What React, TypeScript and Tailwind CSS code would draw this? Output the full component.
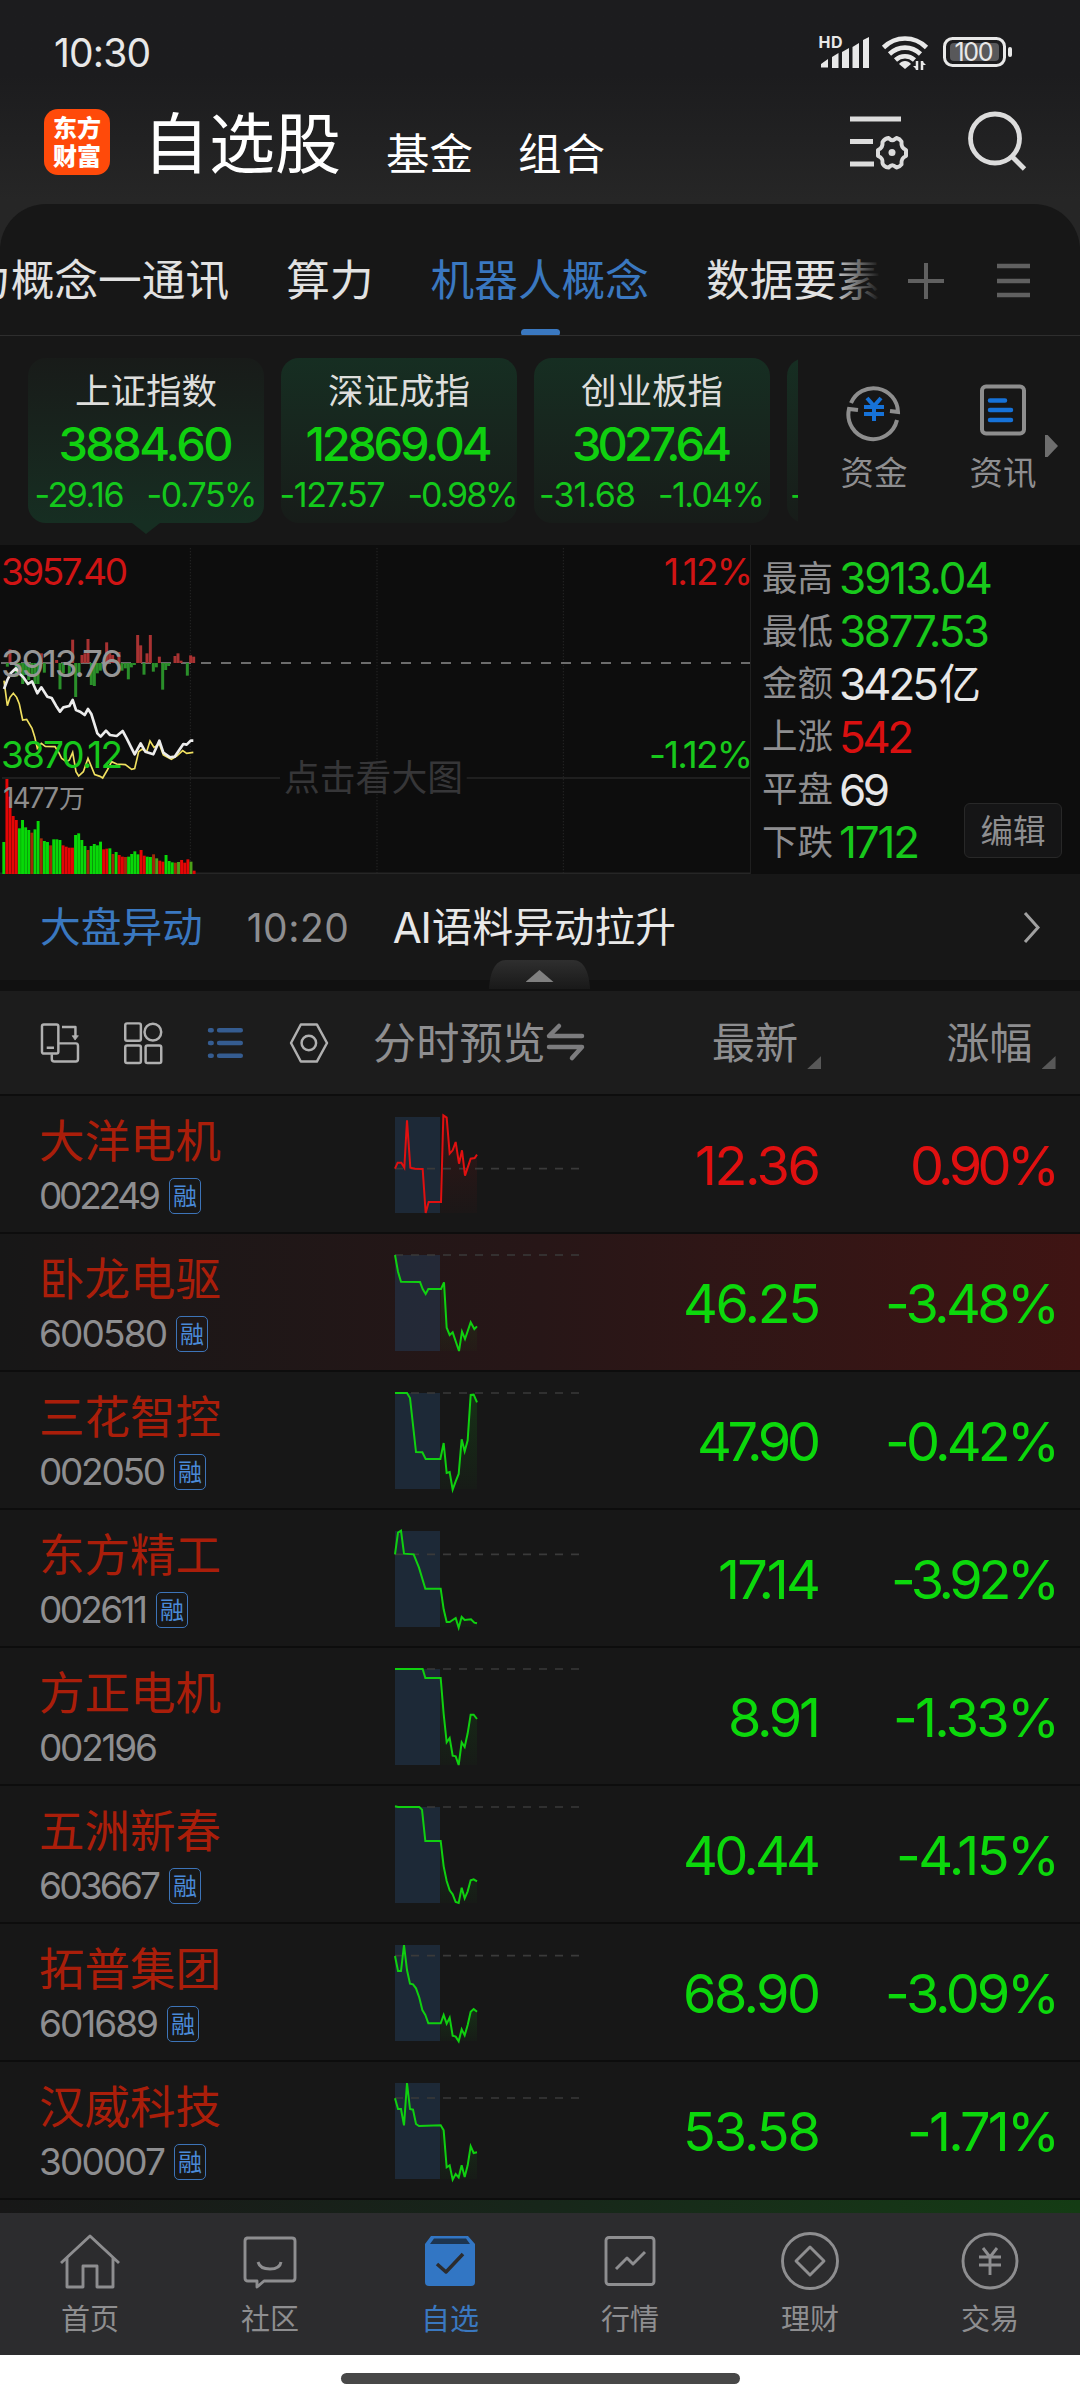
import { useLayoutEffect, useRef, useState, type ReactNode } from 'react';

const UP = '#e01010';
const DOWN = '#10d010';

/** Text whose tracking is adjusted so that it fills exactly `w` pixels. */
function Fit({ w, className = '', children }: { w: number; className?: string; children: string }) {
  const ref = useRef<HTMLSpanElement>(null);
  const [track, setTrack] = useState(0);
  useLayoutEffect(() => {
    const el = ref.current;
    if (!el) return;
    el.style.letterSpacing = '0px';
    const natural = el.getBoundingClientRect().width;
    const next = (w - natural) / Math.max(1, Array.from(children).length - 1);
    el.style.letterSpacing = `${next}px`;
    setTrack(next);
  }, [w, children]);
  return (
    <span ref={ref} className={`inline-block whitespace-nowrap ${className}`} style={{ letterSpacing: `${track}px`, marginRight: `${-track}px` }}>
      {children}
    </span>
  );
}

const CJK = "font-['Noto_Sans_CJK_SC',sans-serif]";

function StatusBar() {
  return (
    <div className="flex h-[100px] items-start justify-between pl-[54px] pr-[68px]">
      <Fit w={97} className="mt-[33px] text-[39px] leading-[40px] text-[#e8e8e8]">10:30</Fit>
      <svg className="mt-[20px]" width="202" height="60" viewBox="810 20 202 60" fill="none">
        <text x="818.5" y="48" fontSize="16" fontWeight="700" fill="#e8e8e8" textLength="24">HD</text>
        <g fill="#e8e8e8">
          <path d="M821 64l7-5v8.500h-7zM832 57l6.500-4v15h-6.500zM842 52l7-4v20h-7zM852.500 47l6.500-4v25h-6.500zM863 40l6-3v31h-6z" />
          <path d="M899 64l6 5 6-5c-3-4-9-4-12 0z" />
        </g>
        <g stroke="#e8e8e8" strokeWidth="4.600">
          <path d="M883.500 47.500c12-12 31-12 43 0M889.500 54c9-8.500 22-8.500 31 0M895.500 60c5.500-5 13.500-5 19 0" />
          <path d="M917 61v9M922 61v9" strokeWidth="2.500" />
        </g>
        <path d="M913 66h4v4zM922 61l4 4h-4z" fill="#e8e8e8" />
        <rect x="944.500" y="38.500" width="60" height="27" rx="8" stroke="#e8e8e8" strokeWidth="3" />
        <rect x="950" y="43" width="49" height="18" rx="4" fill="#58585a" />
        <rect x="1008" y="47" width="4" height="10" rx="2" fill="#e8e8e8" />
        <text x="974" y="61" fontSize="25" fill="#e8e8e8" textAnchor="middle" textLength="39">100</text>
      </svg>
    </div>
  );
}

function Header() {
  return (
    <div className={`flex h-[104px] items-start pl-[44px] ${CJK} text-white`}>
      <div className="mt-[9px] flex h-[66px] w-[66px] flex-col items-center justify-center rounded-[14px] bg-[#ff4a0a] pb-[2px] text-[24px] font-black leading-[28px]">
        <span>东方</span>
        <span>财富</span>
      </div>
      <div className="ml-[33px] mt-[1px] w-[201px] whitespace-nowrap text-[66px] leading-[76px]">自选股</div>
      <div className="ml-[42px] mt-[22px] text-[43.500px] leading-[60px]">基金</div>
      <div className="ml-[45px] mt-[22px] text-[43.500px] leading-[60px]">组合</div>
      <svg className="ml-auto mr-[45px] mt-[5px]" width="187" height="80" viewBox="848 105 187 80" fill="none" stroke="#dcdcdc" strokeWidth="4.800">
        <path d="M850 119h51M850 141.500h23M850 164h24" />
        <path
          d="M892 137.500c3 3 4.500 3 8 0 2 .5 4 2 5 3.500-.5 5 1 7 4.500 8.500v6c-3.500 1.500-5 3.500-4.500 8.500-1 1.500-3 2.500-5 3-3.500-3-5-3-8 0-3.500 0-6-3-6-4.500 .5-4-1-5.500-4.500-7v-6c3.500-1.500 5-3.500 4.500-8 1-1.500 3-3.500 6-4z"
          strokeWidth="4"
          strokeLinejoin="round"
          transform="translate(-3.500 0.500)"
        />
        <circle cx="892" cy="152.500" r="3.500" fill="#dcdcdc" stroke="none" />
        <circle cx="995" cy="138.500" r="24.500" />
        <path d="M1011.500 156l13 13" />
      </svg>
    </div>
  );
}

function GroupTabs() {
  return (
    <div className={`flex h-[132px] items-start overflow-hidden border-b border-[#2e2e2e] ${CJK} text-[43.7px] leading-[64px] text-[#e2e2e2]`}>
      <div className="relative flex h-full w-[880px] shrink-0 overflow-hidden pt-[41px]">
        <span className="ml-[-33px] shrink-0">力概念一通讯</span>
        <span className="ml-[57px] shrink-0">算力</span>
        <div className="relative ml-[57px] shrink-0 text-[#3a78c0]">
          机器人概念
          <div className="absolute left-[90px] top-[84px] h-[7px] w-[39px] rounded-full bg-[#3a78c0]" />
        </div>
        <span className="ml-[57px] shrink-0">数据要素</span>
        <div className="absolute right-0 top-0 h-[120px] w-[50px] bg-gradient-to-r from-transparent to-[#171717]" />
      </div>
      <svg className="mt-[50px]" width="160" height="56" viewBox="880 254 160 56" stroke="#606060" strokeWidth="4">
        <path d="M908 281h36M926 263v36" />
        <path d="M997 266h33M997 281h33M997 295h33" strokeWidth="4.500" />
      </svg>
    </div>
  );
}

function IndexCard({ name, value, vw, diff, dw, pct, pw, active = false }: { name: string; value: string; vw: number; diff: string; dw: number; pct: string; pw: number; active?: boolean }) {
  return (
    <div
      className={`relative flex h-[165px] w-[236px] shrink-0 flex-col items-center rounded-[18px] ${
        active ? 'bg-gradient-to-b from-[#181b19] to-[#162e22]' : 'bg-gradient-to-b from-[#162e22] to-[#171c19]'
      }`}
    >
      <span className={`${CJK} mt-[6px] text-[35.500px] leading-[50px] text-[#dededc]`}>{name}</span>
      <Fit w={vw} className="mt-[6px] text-[47px] font-medium leading-[48px] text-[#10d010]">{value}</Fit>
      <div className="mt-[10px] flex w-[236px] items-start justify-center gap-[22px] text-[34px] leading-[34px] text-[#14c81c]">
        <Fit w={dw}>{diff}</Fit>
        <Fit w={pw}>{pct}</Fit>
      </div>
      {active && <div className="absolute top-full h-[11px] w-[28px] bg-[#162e22] [clip-path:polygon(0_0,100%_0,50%_100%)]" />}
    </div>
  );
}

function Indices() {
  return (
    <div className="flex h-[209px] items-start pt-[22px]">
      <div className="flex h-[187px] w-[798px] gap-[17px] overflow-hidden pl-[28px]">
        <IndexCard active name="上证指数" value="3884.60" vw={175} diff="-29.16" dw={90} pct="-0.75%" pw={111} />
        <IndexCard name="深证成指" value="12869.04" vw={187} diff="-127.57" dw={106} pct="-0.98%" pw={111} />
        <IndexCard name="创业板指" value="3027.64" vw={160} diff="-31.68" dw={97} pct="-1.04%" pw={107} />
        <div className="flex h-[165px] w-[236px] shrink-0 rounded-[18px] bg-gradient-to-b from-[#162e22] to-[#171c19] pl-[3px] pt-[120px] text-[34px] leading-[34px] text-[#14c81c]">-</div>
      </div>
      <div className={`ml-[32px] flex w-[250px] gap-[41px] ${CJK} text-[33.500px] leading-[48px] text-[#8e8e90]`}>
        <div className="flex w-[88px] flex-col items-center">
          <svg width="64" height="64" viewBox="-32 -32 64 64" fill="none" stroke="#8e8e8e" strokeWidth="4" className="mt-[20px]">
            <path d="M-23 -7A24.500 24.500 0 0 1 24 2l-8 -1M23 10A24.500 24.500 0 0 1 -25 -1l9 1" />
            <path d="M-7 -12L0 -4L7 -12M0 -4V11M-10 -3H10M-10 4H10" stroke="#1672d8" strokeWidth="4" />
          </svg>
          <span className="mt-[5px]">资金</span>
        </div>
        <div className="flex w-[88px] flex-col items-center">
          <svg width="64" height="64" viewBox="-32 -32 64 64" fill="none" className="mt-[20px]">
            <rect x="-21" y="-23.500" width="42" height="47" rx="4" stroke="#8e8e8e" strokeWidth="4" />
            <path d="M-13 -9.500H2M-13 0H8M-13 10H8" stroke="#1672d8" strokeWidth="4.500" strokeLinecap="round" />
          </svg>
          <span className="mt-[5px]">资讯</span>
        </div>
        <div className="ml-[-43px] mt-[77px] h-[22px] w-[13px] shrink-0 bg-[#6e6e6e] [clip-path:polygon(0_0,20%_0,100%_50%,20%_100%,0_100%)]" />
      </div>
    </div>
  );
}

const FLOW_UP = [[30, 328], [124, 340], [170, 360], [218, 299], [246, 345], [255, 340], [264, 297], [320, 307], [329, 340], [338, 345], [348, 362], [357, 336], [413, 285], [422, 316], [441, 340], [451, 285], [478, 350], [525, 348], [534, 340], [543, 362], [572, 346], [581, 350]];
const FLOW_DOWN = [[22, 380], [49, 410], [58, 400], [68, 432], [77, 405], [86, 420], [96, 410], [105, 432], [114, 432], [133, 398], [180, 448], [190, 400], [208, 405], [227, 471], [237, 402], [274, 435], [283, 438], [292, 400], [301, 392], [366, 392], [376, 385], [385, 418], [394, 382], [403, 375], [432, 404], [460, 395], [469, 382], [488, 449], [497, 390], [506, 378], [562, 407]];
const VOLUME =
  'g906 r717 r770 r828 r840 g865 g840 g862 g870 d878 g868 g843 d895 g903 g906 d916 g898 g898 g900 r916 r920 r923 r923 g885 g880 g900 g918 d930 g918 g912 g916 g905 r928 r926 g925 d942 g936 r945 r950 d951 g950 g942 g934 g943 r930 r947 g950 g951 d943 o955 r962 r965 g945 g963 g967 d968 o966 r960 r968 r958 o965 r992'.split(' ');
const VOLUME_COLOR: Record<string, string> = { g: '#08d808', r: '#e60505', d: '#a02a08', o: '#4ca018' };

function MarketChart() {
  return (
    <div className="relative h-[329px] w-[750px] shrink-0">
      <svg width="750" height="329" viewBox="0 15 2250 987" fill="none">
        <g stroke="#262626" strokeWidth="3" strokeDasharray="4 5">
          <path d="M571 24V1000M1131 24V1000M1690 24V1000" />
        </g>
        <path d="M0 369H2250" stroke="#8c8c8c" strokeWidth="5" strokeDasharray="30 30" strokeDashoffset="-3" />
        <path d="M6 714H840M1400 714H2250M0 1000H2250" stroke="#262626" strokeWidth="5" />
        {FLOW_UP.map(([x, y]) => <rect key={x} x={x - 4.5} y={y} width="9" height={369 - y} fill="#a83232" />)}
        {FLOW_DOWN.map(([x, y]) => <rect key={x} x={x - 4.5} y={369} width="9" height={y - 369} fill="#2a8f2a" />)}
        {VOLUME.map((v, i) => {
          const y = Number(v.slice(1));
          return <rect key={i} x={7 + i * 9.36} y={y} width="8.800" height={1002 - y} fill={VOLUME_COLOR[v[0]]} />;
        })}
        <polyline stroke="#f0e060" strokeWidth="5" points="12,422 22,497 30,472 40,460 50,472 58,492 68,540 80,538 96,565 104,590 112,625 124,610 136,619 165,620 175,635 185,655 200,665 208,660 218,637 228,695 236,708 250,695 264,655 284,704 300,709 308,714 322,690 335,665 350,672 376,674 395,688 404,686 416,635 426,628 440,635 450,603 462,622 478,612 490,645 514,658 530,648 548,632 560,640 580,637" />
        <polyline stroke="#ececec" strokeWidth="8" strokeLinejoin="round" points="12,447 22,420 32,400 48,385 58,400 70,412 84,432 96,424 112,460 124,442 142,470 155,474 168,497 180,515 190,502 208,498 218,480 228,510 240,515 254,525 264,507 274,522 292,580 302,590 318,572 330,585 350,588 368,573 380,595 404,643 422,610 436,635 460,643 478,602 490,638 510,652 524,650 550,612 560,614 572,602 580,602" />
      </svg>
      <div className="absolute inset-0 flex justify-between text-[37px] leading-[40px]">
        <div className="flex flex-col items-start">
          <Fit w={127} className="ml-px mt-[7px] text-[#d01414]">3957.40</Fit>
          <Fit w={122} className="ml-px mt-[52px] text-[#969696]">3913.76</Fit>
          <Fit w={122} className="ml-px mt-[51px] text-[#18c81c]">3870.12</Fit>
          <div className="mt-[8px] flex pl-[3px] leading-[30px] text-[#8c8c8c]">
            <Fit w={56} className="text-[28px]">1477</Fit>
            <span className={`${CJK} -mt-px text-[26px]`}>万</span>
          </div>
        </div>
        <div className="-mr-[3px] flex flex-col items-end">
          <Fit w={89} className="mt-[7px] text-[#d01414]">1.12%</Fit>
          <Fit w={104} className="mt-[143px] text-[#18c81c]">-1.12%</Fit>
        </div>
      </div>
      <div className={`absolute left-[284px] top-[204px] ${CJK} text-[35.800px] leading-[52px] text-[#363638]`}>点击看大图</div>
    </div>
  );
}

const STATS = [
  { label: '最高', value: '3913.04', w: 154, tone: 'text-[#18c81c]' },
  { label: '最低', value: '3877.53', w: 151, tone: 'text-[#18c81c]' },
  { label: '金额', value: '3425', w: 100, tone: 'text-[#e8e8e8]', unit: '亿' },
  { label: '上涨', value: '542', w: 75, tone: 'text-[#d81010]' },
  { label: '平盘', value: '69', w: 51, tone: 'text-[#e8e8e8]' },
  { label: '下跌', value: '1712', w: 81, tone: 'text-[#18c81c]' },
];

function Market() {
  return (
    <div className="flex h-[329px] shrink-0 bg-[#0d0d0d]">
      <MarketChart />
      <div className="relative h-full grow border-l border-[#1f1f1f] pl-[11px] pt-[7px]">
        {STATS.map((s) => (
          <div key={s.label} className="flex h-[52.800px] items-center">
            <span className={`${CJK} -mt-[5px] w-[77px] text-[35.500px] leading-[52px] text-[#8e8e90]`}>{s.label}</span>
            <Fit w={s.w} className={`text-[44px] leading-[52px] ${s.tone}`}>{s.value}</Fit>
            {s.unit && <span className={`${CJK} -mt-[5px] text-[42px] leading-[52px] text-[#e8e8e8]`}>{s.unit}</span>}
          </div>
        ))}
        <div className={`absolute bottom-[16px] right-[18px] flex h-[55px] w-[98px] items-center justify-center rounded-[6px] border border-[#282828] bg-[#151516] ${CJK} pb-[3px] text-[32.500px] text-[#8e8e90]`}>编辑</div>
      </div>
    </div>
  );
}

function News() {
  return (
    <div className="relative h-[117px] shrink-0 border-b-[11px] border-[#111111]">
      <div className={`flex h-[106px] items-start pl-[40px] ${CJK} text-[40.700px] leading-[60px]`}>
        <span className="mt-[21px] text-[#3a78c0]">大盘异动</span>
        <Fit w={102} className="ml-[44px] mt-[24px] font-['Inter',sans-serif] text-[39px] leading-[60px] text-[#8e8e90]">10:20</Fit>
        <Fit w={39} className="ml-[44px] mt-[24px] font-['Inter',sans-serif] text-[42px] leading-[60px] text-[#e8e8e8]">AI</Fit>
        <span className="mt-[21px] text-[#e8e8e8]">语料异动拉升</span>
        <svg className="ml-auto mr-[36px] mt-[35px]" width="24" height="36" viewBox="0 0 24 36" fill="none" stroke="#a0a0a0" strokeWidth="3">
          <path d="M5 4l13 14.500L5 33" />
        </svg>
      </div>
      <div className="absolute left-[489px] top-[86px] flex h-[29px] w-[101px] justify-center bg-gradient-to-b from-[#2f2f2f] to-[#191919] pt-[10px] [clip-path:path('M0_29C1_12_6_0_17_0H84C95_0_100_12_101_29Z')]">
        <div className="h-[12px] w-[28px] bg-[#808080] [clip-path:polygon(50%_0,100%_100%,0_100%)]" />
      </div>
    </div>
  );
}

function Corner({ className = '' }: { className?: string }) {
  return <div className={`h-[13px] w-[14px] bg-[#585858] [clip-path:polygon(100%_0,100%_100%,0_100%)] ${className}`} />;
}

function Toolbar() {
  return (
    <div className={`flex h-[105px] shrink-0 items-start border-b-2 border-[#0d0d0d] bg-[#1c1c1c] ${CJK} text-[43.2px] leading-[60px] text-[#8e8e90]`}>
      <svg className="mt-[5px] shrink-0" width="373" height="90" viewBox="0 0 1026 247" fill="none" stroke="#b0b0b0" strokeWidth="6.800" strokeLinejoin="round">
        <g transform="translate(82.500 0)">
          <rect x="33" y="78" width="45" height="80" rx="5" />
          <path d="M46 142H66M88 85H125V112M80 130H126Q132 130 132 137V173Q132 180 126 180H67Q60 180 60 173V160" />
          <path d="M116 109H133L124 121Z" fill="#b0b0b0" strokeWidth="2" />
          <rect x="262" y="75" width="43" height="48" rx="5" />
          <circle cx="338" cy="99" r="23" />
          <rect x="262" y="136" width="43" height="48" rx="5" />
          <rect x="318" y="136" width="43" height="48" rx="5" />
          <path d="M520 94H580M520 129H580M520 164H580M495 94H500M495 129H500M495 164H500" stroke="#355c90" strokeWidth="12" strokeLinecap="round" />
          <path d="M745 78H789L817 129L789 180H745L718 129Z" />
          <circle cx="767" cy="129" r="20" />
        </g>
      </svg>
      <span className="mt-[19px]">分时预览</span>
      <svg className="mt-[29px]" width="40" height="44" viewBox="0 0 40 44" fill="none" stroke="#7c7c7e" strokeWidth="4.500" strokeLinejoin="round" strokeLinecap="round">
        <path d="M36 16H3L13 6M3 27H36L26 38" />
      </svg>
      <span className="ml-[126px] mt-[19px]">最新</span>
      <Corner className="ml-[9px] mt-[65px]" />
      <span className="ml-[125px] mt-[19px]">涨幅</span>
      <Corner className="ml-[9px] mt-[65px]" />
    </div>
  );
}

type Stock = { name: string; code: string; cw: number; margin: boolean; price: string; w: number; pct: string; pw: number; base: number; line: string; up?: boolean };

const STOCKS: Stock[] = [
  { name: '大洋电机', code: '002249', cw: 122, margin: true, price: '12.36', w: 126, pct: '0.90%', pw: 150, base: 155, up: true, line: '0,155 8,137 19,137 28,152 36,10 46,152 60,155 83,156 92,288 101,255 138,255 145,-5 155,2 164,110 173,100 182,75 192,140 201,100 210,176 227,125 239,123 246,113' },
  { name: '卧龙电驱', code: '600580', cw: 129, margin: true, price: '46.25', w: 138, pct: '-3.48%', pw: 175, base: 0, line: '0,0 9,50 18,80 75,81 83,102 92,117 100,102 138,102 147,82 155,218 164,240 173,232 192,288 201,230 210,252 227,202 238,222 246,214' },
  { name: '三花智控', code: '002050', cw: 127, margin: true, price: '47.90', w: 124, pct: '-0.42%', pw: 175, base: 0, line: '0,0 36,0 45,15 63,177 82,178 92,198 136,198 146,150 155,240 164,237 173,290 182,265 191,243 200,139 209,175 218,142 227,6 236,5 246,28' },
  { name: '东方精工', code: '002611', cw: 109, margin: true, price: '17.14', w: 103, pct: '-3.92%', pw: 169, base: 70, line: '0,70 9,5 18,-1 27,68 56,70 72,110 91,173 137,173 146,235 155,273 164,273 182,261 191,290 200,258 209,267 228,265 238,275 246,277' },
  { name: '方正电机', code: '002196', cw: 119, margin: false, price: '8.91', w: 93, pct: '-1.33%', pw: 167, base: 0, line: '0,0 83,0 91,27 137,27 146,135 155,220 164,207 173,260 182,262 191,288 200,220 209,234 218,193 227,137 236,137 246,150' },
  { name: '五洲新春', code: '603667', cw: 122, margin: true, price: '40.44', w: 138, pct: '-4.15%', pw: 164, base: 0, line: '0,-2 9,0 73,0 81,8 91,102 137,102 146,178 155,222 164,250 173,262 182,285 191,288 200,242 209,274 218,253 227,220 236,217 246,223' },
  { name: '拓普集团', code: '601689', cw: 120, margin: true, price: '68.90', w: 138, pct: '-3.09%', pw: 175, base: 32, line: '0,33 9,78 18,78 27,0 36,75 45,116 54,118 63,130 73,158 82,195 91,210 100,235 137,235 146,210 155,236 164,218 173,272 182,275 191,289 200,253 209,271 218,240 227,200 236,192 246,200' },
  { name: '汉威科技', code: '300007', cw: 127, margin: true, price: '53.58', w: 138, pct: '-1.71%', pw: 153, base: 45, line: '0,46 9,78 18,78 27,127 36,0 45,78 54,80 63,123 72,129 137,127 146,142 155,253 164,247 173,290 182,273 191,283 200,247 209,282 218,247 227,190 236,210 246,208' },
];

function Spark({ stock }: { stock: Stock }) {
  const color = stock.up ? UP : DOWN;
  const right = stock.line.split(' ').filter((p) => Number(p.split(',')[0]) >= 136).join(' ');
  const id = `fade-${stock.code}`;
  return (
    <svg width="190" height="108" viewBox="-3 -12 570 324" fill="none" className="mt-[17px]">
      <defs>
        <linearGradient id={id} x1="0" y1="0" x2="0" y2="1">
          <stop offset="0" stopColor={color} stopOpacity="0.14" />
          <stop offset="1" stopColor={color} stopOpacity="0.02" />
        </linearGradient>
      </defs>
      <rect width="135" height="288" fill="#233c58" fillOpacity="0.5" />
      <polygon points={`136,288 ${right} 246,288`} fill={`url(#${id})`} />
      <path d={`M0 ${stock.base}H553`} stroke="#3a3a3a" strokeWidth="5" strokeDasharray="24 24" />
      <polyline points={stock.line} stroke={color} strokeWidth="6" />
    </svg>
  );
}

function Row({ stock, highlight }: { stock: Stock; highlight: boolean }) {
  const tone = stock.up ? 'text-[#e01010]' : 'text-[#0cd80c]';
  return (
    <div className={`flex h-[138px] items-start border-b-2 border-[#0d0d0d] ${highlight ? 'bg-gradient-to-r from-[#171717] via-[#271617] to-[#3f1413]' : ''}`}>
      <div className="w-[394px] shrink-0 pl-[39px]">
        <div className={`${CJK} mt-[11px] text-[45.500px] leading-[62px] text-[#aa1e0a]`}>{stock.name}</div>
        <div className="mt-[6px] flex h-[42px] items-center gap-[8px] text-[37px] leading-[42px] text-[#8e8e90]">
          <Fit w={stock.cw}>{stock.code}</Fit>
          {stock.margin && (
            <span className={`flex h-[36px] w-[32px] items-center justify-center rounded-[5px] border border-[#3d74b8] ${CJK} pb-[3px] text-[24px] leading-[30px] text-[#4a8ad8]`}>融</span>
          )}
        </div>
      </div>
      <Spark stock={stock} />
      <div className="flex w-[237px] justify-end">
        <Fit w={stock.w} className={`mt-[40px] text-[54px] leading-[60px] ${tone}`}>{stock.price}</Fit>
      </div>
      <div className="flex w-[239px] justify-end">
        <Fit w={stock.pw} className={`mt-[40px] text-[54px] leading-[60px] ${tone}`}>{stock.pct}</Fit>
      </div>
    </div>
  );
}

const NAV: { label: string; icon: ReactNode; active?: boolean }[] = [
  { label: '首页', icon: <path d="M-29 2L0 -25L29 2M-23 -3V26H-7V5H7V26H23V-3" /> },
  { label: '社区', icon: <path d="M-23 -23H22Q25 -23 25 -20V17Q25 20 22 20H-6L-13 26V20H-22Q-25 20 -25 17V-20Q-25 -23 -22 -23ZM-12 1Q-10 8 0 8T11 1" /> },
  {
    label: '自选',
    active: true,
    icon: (
      <>
        <path d="M-19 -25H18L25 -17V21Q25 25 21 25H-21Q-25 25 -25 21V-17Z" fill="#3276c4" stroke="none" />
        <path d="M-16 -22.500H16L20 -17H-20Z" fill="#1d3550" stroke="none" />
        <path d="M-13 3L-4 11L13 -7" stroke="#2c2c2e" strokeWidth="3.500" />
      </>
    ),
  },
  { label: '行情', icon: <><rect x="-24" y="-23.500" width="48" height="47" rx="3" /><path d="M-14 8L-3 -3L3 3L15 -9" /></> },
  { label: '理财', icon: <><circle r="27.500" /><path d="M0 -14L14 0L0 14L-14 0Z" /></> },
  { label: '交易', icon: <><circle r="27" /><path d="M-7 -13L0 -4L7 -13M0 -4V14M-11 -4H11M-11 4H11" /></> },
];

function BottomNav() {
  return (
    <nav className={`flex h-[142px] shrink-0 bg-[#2c2c2e] ${CJK} text-[29px] leading-[40px]`}>
      {NAV.map((n) => (
        <div key={n.label} className={`flex w-[180px] flex-col items-center pt-[16px] ${n.active ? 'text-[#3a78c0]' : 'text-[#8e8e90]'}`}>
          <svg width="64" height="64" viewBox="-32 -32 64 64" fill="none" stroke="#8e8e90" strokeWidth="2.900" strokeLinejoin="round">{n.icon}</svg>
          <span className="mt-[4px]">{n.label}</span>
        </div>
      ))}
    </nav>
  );
}

export default function App() {
  return (
    <div className="flex h-[2400px] w-[1080px] flex-col overflow-hidden bg-[#171717] font-['Inter','Noto_Sans_CJK_SC',sans-serif]">
      <div className="h-[250px] shrink-0 bg-gradient-to-b from-[#1c1c1e] from-30% to-[#262626] to-80%">
        <StatusBar />
        <Header />
      </div>
      <div className="relative -mt-[46px] shrink-0 rounded-t-[46px] bg-[#171717]">
        <GroupTabs />
        <Indices />
      </div>
      <Market />
      <News />
      <Toolbar />
      <div className="h-[1117px] shrink-0 overflow-hidden">
        {STOCKS.map((s, i) => <Row key={s.code} stock={s} highlight={i === 1} />)}
        <div className="h-[13px] bg-gradient-to-r from-[#171717] via-[#17261a] to-[#143c14]" />
      </div>
      <BottomNav />
      <div className="flex h-[45px] shrink-0 justify-center bg-white pt-[18px]">
        <div className="h-[11px] w-[399px] rounded-full bg-[#484848]" />
      </div>
    </div>
  );
}
